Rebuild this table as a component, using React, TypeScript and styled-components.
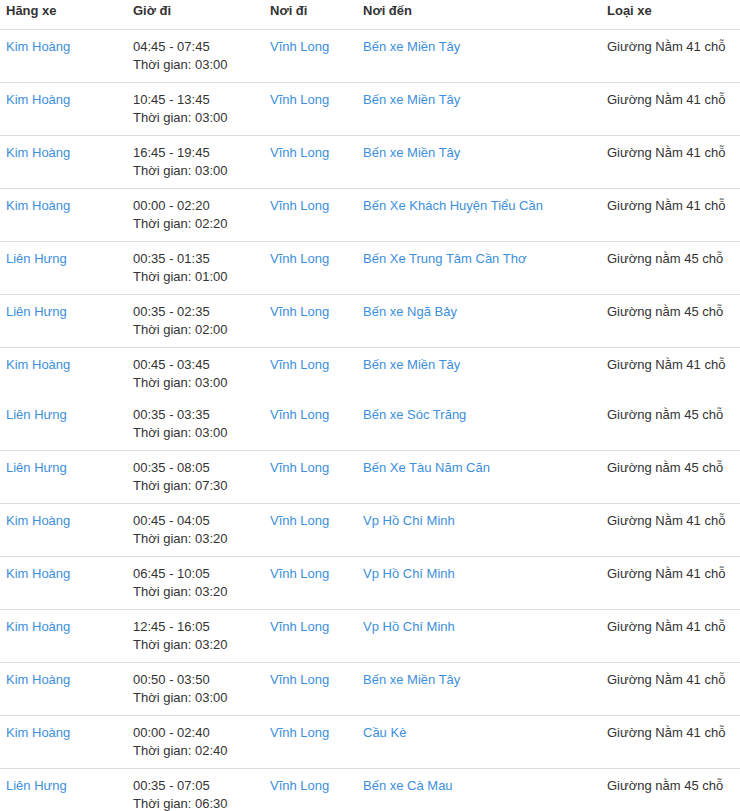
import React from "react";
import styled, { createGlobalStyle } from "styled-components";

const Global = createGlobalStyle`
  html, body { margin: 0; padding: 0; background: #fff; }
  body { font-family: "Liberation Sans", Arial, sans-serif; font-size: 13px; color: #333; }
`;

const Table = styled.table`
  width: 748px;
  border-collapse: collapse;
  table-layout: fixed;
  font-family: "Liberation Sans", Arial, sans-serif;
  font-size: 13px;
  line-height: 18px;
  color: #333;
`;

const Th = styled.th`
  text-align: left;
  font-weight: bold;
  padding: 2px 6px 9px;
  border-bottom: 1px solid #ddd;
  vertical-align: top;
`;

const Td = styled.td<{ $seamless?: boolean }>`
  padding: ${(p) => (p.$seamless ? "6px 6px 8px" : "8px 6px")};
  border-top: ${(p) => (p.$seamless ? "0" : "1px solid #ddd")};
  vertical-align: top;
  height: 36px;
`;

const Link = styled.a`
  color: #3d8fdc;
  text-decoration: none;
`;

type Trip = {
  company: string;
  time: string;
  duration: string;
  to: string;
  bus: string;
  seamless?: boolean;
};

const KH = "Kim Hoàng";
const LH = "Liên Hưng";
const G41 = "Giường Nằm 41 chỗ";
const G45 = "Giường nằm 45 chỗ";

const trips: Trip[] = [
  { company: KH, time: "04:45 - 07:45", duration: "03:00", to: "Bến xe Miền Tây", bus: G41 },
  { company: KH, time: "10:45 - 13:45", duration: "03:00", to: "Bến xe Miền Tây", bus: G41 },
  { company: KH, time: "16:45 - 19:45", duration: "03:00", to: "Bến xe Miền Tây", bus: G41 },
  { company: KH, time: "00:00 - 02:20", duration: "02:20", to: "Bến Xe Khách Huyện Tiểu Cần", bus: G41 },
  { company: LH, time: "00:35 - 01:35", duration: "01:00", to: "Bến Xe Trung Tâm Cần Thơ", bus: G45 },
  { company: LH, time: "00:35 - 02:35", duration: "02:00", to: "Bến xe Ngã Bảy", bus: G45 },
  { company: KH, time: "00:45 - 03:45", duration: "03:00", to: "Bến xe Miền Tây", bus: G41 },
  { company: LH, time: "00:35 - 03:35", duration: "03:00", to: "Bến xe Sóc Trăng", bus: G45, seamless: true },
  { company: LH, time: "00:35 - 08:05", duration: "07:30", to: "Bến Xe Tàu Năm Căn", bus: G45 },
  { company: KH, time: "00:45 - 04:05", duration: "03:20", to: "Vp Hồ Chí Minh", bus: G41 },
  { company: KH, time: "06:45 - 10:05", duration: "03:20", to: "Vp Hồ Chí Minh", bus: G41 },
  { company: KH, time: "12:45 - 16:05", duration: "03:20", to: "Vp Hồ Chí Minh", bus: G41 },
  { company: KH, time: "00:50 - 03:50", duration: "03:00", to: "Bến xe Miền Tây", bus: G41 },
  { company: KH, time: "00:00 - 02:40", duration: "02:40", to: "Cầu Kè", bus: G41 },
  { company: LH, time: "00:35 - 07:05", duration: "06:30", to: "Bến xe Cà Mau", bus: G45 },
];

export default function App() {
  return (
    <>
      <Global />
      <Table>
        <colgroup>
          <col style={{ width: 127 }} />
          <col style={{ width: 137 }} />
          <col style={{ width: 93 }} />
          <col style={{ width: 244 }} />
          <col />
        </colgroup>
        <thead>
          <tr>
            <Th>Hãng xe</Th>
            <Th>Giờ đi</Th>
            <Th>Nơi đi</Th>
            <Th>Nơi đến</Th>
            <Th>Loại xe</Th>
          </tr>
        </thead>
        <tbody>
          {trips.map((t, i) => (
            <tr key={i}>
              <Td $seamless={t.seamless}>
                <Link href="#">{t.company}</Link>
              </Td>
              <Td $seamless={t.seamless}>
                {t.time}
                <br />
                Thời gian: {t.duration}
              </Td>
              <Td $seamless={t.seamless}>
                <Link href="#">Vĩnh Long</Link>
              </Td>
              <Td $seamless={t.seamless}>
                <Link href="#">{t.to}</Link>
              </Td>
              <Td $seamless={t.seamless}>{t.bus}</Td>
            </tr>
          ))}
        </tbody>
      </Table>
    </>
  );
}
